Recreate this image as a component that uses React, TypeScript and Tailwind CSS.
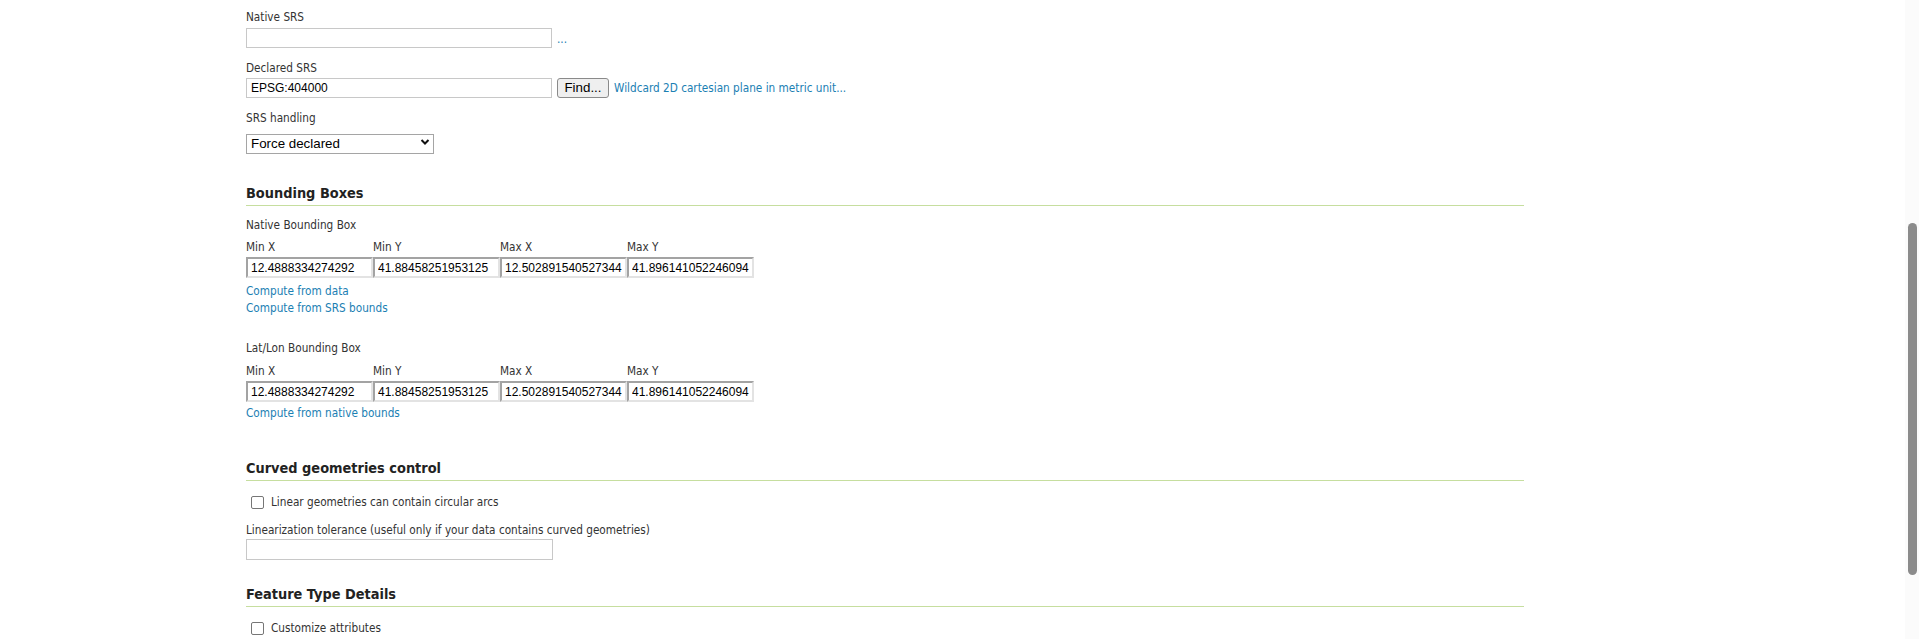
import React from 'react';

const font = 'font-["DejaVu_Sans_Condensed","DejaVu_Sans",sans-serif] font-stretch-condensed';
const arial = 'font-["Liberation_Sans",Arial,sans-serif]';
const label = 'block text-[11.7px] leading-[16px] text-[#333]';
const link = 'text-[11.7px] leading-[17px] text-[#1b80b3] hover:underline cursor-pointer';
const heading = 'text-[14.4px] leading-[18px] font-bold text-[#222] pb-[3px] border-b border-[#c6de9f]';
const textInput = `${arial} h-[20px] w-[306px] border border-[#c8c8c8] bg-white px-[4px] text-[12px] text-black outline-none`;

const bbox = ['12.4888334274292', '41.88458251953125', '12.502891540527344', '41.896141052246094'];
const cols = ['Min X', 'Min Y', 'Max X', 'Max Y'];

const BBox = ({ values }: { values: string[] }) => (
  <div className="grid grid-cols-[127px_127px_127px_127px]">
    {cols.map(c => (
      <span key={c} className="text-[11.7px] leading-[14px] text-[#333]">{c}</span>
    ))}
    {values.map((v, i) => (
      <input
        key={i}
        readOnly
        value={v}
        className={`${arial} mt-[3px] h-[21px] w-[127px] border-2 border-[#a3a3a3] border-b-[#e3e3e3] border-r-[#e3e3e3] bg-white px-[3px] text-[12px] text-black outline-none`}
      />
    ))}
  </div>
);

const Check = ({ text }: { text: string }) => (
  <label className="flex items-center h-[16px] text-[11.7px] leading-[16px] text-[#333]">
    <input type="checkbox" className="appearance-none ml-[5px] mr-[7px] w-[13px] h-[13px] border border-[#767676] rounded-[2px] bg-white" />
    {text}
  </label>
);

export default function App() {
  return (
    <div className={`${font} min-h-screen bg-white relative`}>
      <div className="ml-[246px] w-[1278px] pt-[9px] pb-[20px] flex flex-col">
        <span className={label}>Native SRS</span>
        <div className="mt-[2px] flex items-center">
          <input className={textInput} />
          <span className={`${link} ml-[5px] mt-[4px]`}>...</span>
        </div>

        <span className={`${label} mt-[12px]`}>Declared SRS</span>
        <div className="mt-[2px] flex items-center">
          <input className={`${textInput} border-[#a5a5a5]`} defaultValue="EPSG:404000" />
          <button className={`${arial} ml-[5px] h-[20px] w-[52px] border border-[#8a8a8a] rounded-[3px] bg-[#efefef] text-[13.33px] leading-[18px] text-black`}>Find...</button>
          <span className={`${link} ml-[5px]`}>Wildcard 2D cartesian plane in metric unit...</span>
        </div>

        <span className={`${label} mt-[12px]`}>SRS handling</span>
        <div className="mt-[8px] relative w-[188px] h-[20px]">
          <select defaultValue="force" className={`${arial} block appearance-none h-[20px] w-[188px] border border-[#a5a5a5] bg-white pl-[4px] text-[13.33px] leading-[18px] text-black outline-none`}>
            <option value="force">Force declared</option>
            <option value="keep">Keep native</option>
            <option value="reproject">Reproject native to declared</option>
          </select>
          <svg className="absolute right-[4px] top-[4px] w-[10px] h-[8px] pointer-events-none" viewBox="0 0 10 8">
            <path d="M1.5 2 L5 5.5 L8.5 2" fill="none" stroke="#111" strokeWidth="2" />
          </svg>
        </div>

        <h3 className={`${heading} mt-[30px]`}>Bounding Boxes</h3>
        <span className={`${label} mt-[11px]`}>Native Bounding Box</span>
        <div className="mt-[7px]"><BBox values={bbox} /></div>
        <span className={`${link} mt-[5px]`}>Compute from data</span>
        <span className={link}>Compute from SRS bounds</span>

        <span className={`${label} mt-[23px]`}>Lat/Lon Bounding Box</span>
        <div className="mt-[8px]"><BBox values={bbox} /></div>
        <span className={`${link} mt-[3px]`}>Compute from native bounds</span>

        <h3 className={`${heading} mt-[37px]`}>Curved geometries control</h3>
        <div className="mt-[13px]"><Check text="Linear geometries can contain circular arcs" /></div>
        <span className={`${label} mt-[12px]`}>Linearization tolerance (useful only if your data contains curved geometries)</span>
        <input className={`${textInput} mt-[1px] h-[21px] w-[307px]`} />

        <h3 className={`${heading} mt-[25px]`}>Feature Type Details</h3>
        <div className="mt-[13px]"><Check text="Customize attributes" /></div>
      </div>

      <div className="fixed right-0 top-0 h-full w-[14px] bg-[#fbfbfb] pointer-events-none">
        <div className="absolute left-[3px] top-[223px] h-[352px] w-[9px] rounded-full bg-[#8b8b8b]" />
      </div>
    </div>
  );
}
